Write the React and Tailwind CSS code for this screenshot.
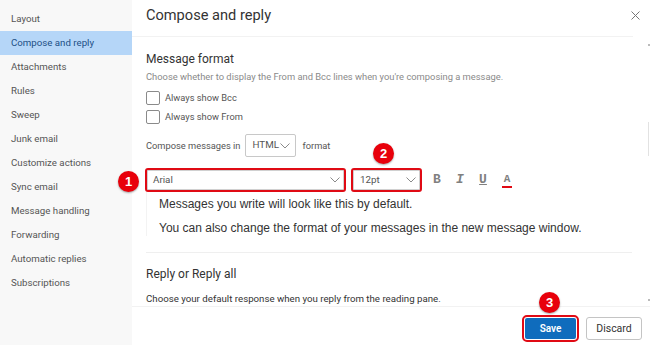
import React from "react";

const sideItems = [
  "Layout",
  "Compose and reply",
  "Attachments",
  "Rules",
  "Sweep",
  "Junk email",
  "Customize actions",
  "Sync email",
  "Message handling",
  "Forwarding",
  "Automatic replies",
  "Subscriptions",
];

function Chevron({ className = "" }) {
  return (
    <svg width="10" height="6" viewBox="0 0 10 6" className={className}>
      <path d="M0.5 0.5 L5 5 L9.5 0.5" fill="none" stroke="#8a8a8a" strokeWidth="1" />
    </svg>
  );
}

function Badge({ n, className }) {
  return (
    <div
      className={`absolute w-[21px] h-[21px] rounded-full bg-[#e8000b] shadow-[0_1px_2px_rgba(0,0,0,0.35)] flex items-center justify-center text-white text-[13px] font-bold leading-none ${className}`}
      style={{ fontFamily: "'Liberation Sans', Arial, sans-serif" }}
    >
      {n}
    </div>
  );
}

function Checkbox({ label }) {
  return (
    <div className="flex items-center h-[18px]">
      <div className="w-[14px] h-[14px] border border-[#8a8a8a] rounded-[2px] bg-white" />
      <span className="ml-[5px] text-[9.3px] text-[#555]">{label}</span>
    </div>
  );
}

export default function App() {
  return (
    <div
      className="relative w-[650px] h-[345px] flex bg-white overflow-hidden"
      style={{ fontFamily: "Roboto, 'Open Sans', sans-serif" }}
    >
      {/* Sidebar */}
      <div className="w-[132px] h-full bg-[#f8f8f8] pt-[7px] flex flex-col">
        {sideItems.map((it) => (
          <div
            key={it}
            className={`h-[24px] shrink-0 flex items-center pl-[11px] text-[9.7px] ${
              it === "Compose and reply" ? "bg-[#b5d6f8] text-[#1c4f86]" : "text-[#555]"
            }`}
          >
            {it}
          </div>
        ))}
      </div>

      {/* Main */}
      <div className="flex-1 h-full flex flex-col">
        {/* Header */}
        <div className="h-[37px] shrink-0 flex items-center pl-[14px] pr-[11px] border-b border-[#f2f2f2] mr-[17px]">
          <span className="text-[14.6px] text-[#333] -mt-[5px]">Compose and reply</span>
          <div className="flex-1" />
          <svg width="9" height="9" viewBox="0 0 9 9" className="-mt-[5px] -mr-[18px]">
            <path d="M0.5 0.5 L8.5 8.5 M8.5 0.5 L0.5 8.5" stroke="#777" strokeWidth="1" />
          </svg>
        </div>

        {/* Scroll area */}
        <div className="h-[270px] shrink-0 flex border-b border-[#f2f2f2]">
          <div className="flex-1 pl-[14px] pr-[15px] flex flex-col">
            <div className="mt-[12px] h-[20px] flex items-center text-[12px] text-[#333]">Message format</div>
            <div className="mt-[2px] h-[14px] flex items-center text-[9.35px] text-[#8a8a8a]">
              Choose whether to display the From and Bcc lines when you're composing a message.
            </div>
            <div className="mt-[5px]">
              <Checkbox label="Always show Bcc" />
            </div>
            <div className="mt-[1px]">
              <Checkbox label="Always show From" />
            </div>
            <div className="mt-[8px] h-[23px] flex items-center text-[9.3px] text-[#555]">
              <span>Compose messages in</span>
              <div className="ml-[5px] w-[51px] h-[23px] border border-[#c8c8c8] rounded-[2px] flex items-center pl-[6px] pr-[5px]">
                <span className="text-[#555] text-[9.8px]">HTML</span>
                <div className="flex-1" />
                <Chevron />
              </div>
              <span className="ml-[6px]">format</span>
            </div>
            <div className="mt-[11px] h-[24px] flex items-center">
              <div className="-ml-[1px] w-[201px] h-[24px] border-2 border-[#e00a14] rounded-[3px] flex items-center pl-[6px] pr-[4px] shadow-[inset_0_0_0_1px_#d0d0d0]">
                <span className="text-[9.8px] text-[#555]">Arial</span>
                <div className="flex-1" />
                <Chevron />
              </div>
              <div className="ml-[5px] w-[71px] h-[24px] border-2 border-[#e00a14] rounded-[3px] flex items-center pl-[7px] pr-[4px] shadow-[inset_0_0_0_1px_#d0d0d0]">
                <span className="text-[9.8px] text-[#555]">12pt</span>
                <div className="flex-1" />
                <Chevron />
              </div>
              <div
                className="ml-[10px] flex items-center text-[13px] text-[#808080]"
                style={{ fontFamily: "'Liberation Mono', 'Courier New', monospace" }}
              >
                <span className="w-[10px] text-center font-bold">B</span>
                <span className="ml-[13px] w-[10px] text-center italic font-bold">I</span>
                <span className="ml-[13px] w-[10px] text-center underline font-bold">U</span>
                <span className="ml-[14px] w-[10px] text-center font-bold border-b-2 border-[#e00a14] leading-[11px] pb-[1px] mt-[2px] text-[11px]">A</span>
              </div>
            </div>
            <div
              className="border-l border-[#f3f3f3] pl-[12px] text-[12px] text-[#333]"
              style={{ fontFamily: "'Liberation Sans', Arial, sans-serif" }}
            >
              <div className="mt-[4px] h-[16px] flex items-center">Messages you write will look like this by default.</div>
              <div className="mt-[8px] h-[16px] flex items-center">
                You can also change the format of your messages in the new message window.
              </div>
            </div>
            <div className="mt-[16px] border-t border-[#efefef]" />
            <div className="mt-[11px] h-[20px] flex items-center text-[12px] text-[#333]">Reply or Reply all</div>
            <div className="mt-[9px] h-[14px] flex items-center text-[9.7px] text-[#333]">
              Choose your default response when you reply from the reading pane.
            </div>
          </div>
          {/* scrollbar */}
          <div className="w-[3px] flex flex-col items-center pt-[7px] pb-[5px]">
            <div className="w-[2px] h-[2px] bg-[#bbb]" />
            <div className="flex-1 w-[1px] flex flex-col">
              <div className="h-[76px]" />
              <div className="h-[34px] w-[1px] bg-[#e2e2e2]" />
            </div>
            <div className="w-[2px] h-[2px] bg-[#bbb]" />
          </div>
        </div>

        {/* Footer */}
        <div className="flex-1 flex items-start justify-end pt-[10px] pr-[8px]">
          <button className="w-[51px] h-[21px] mt-[1px] bg-[#0f6cbd] text-white text-[10px] font-semibold rounded-[2px] outline-2 outline-[#e00a14] outline-offset-[1px] flex items-center justify-center">
            Save
          </button>
          <button className="ml-[10px] w-[56px] h-[23px] border border-[#c4c4c4] rounded-[3px] bg-white text-[#333] text-[10.5px] flex items-center justify-center">
            Discard
          </button>
        </div>
      </div>

      <Badge n="1" className="left-[118px] top-[171px]" />
      <Badge n="2" className="left-[373px] top-[143px]" />
      <Badge n="3" className="left-[539px] top-[292px]" />
    </div>
  );
}
